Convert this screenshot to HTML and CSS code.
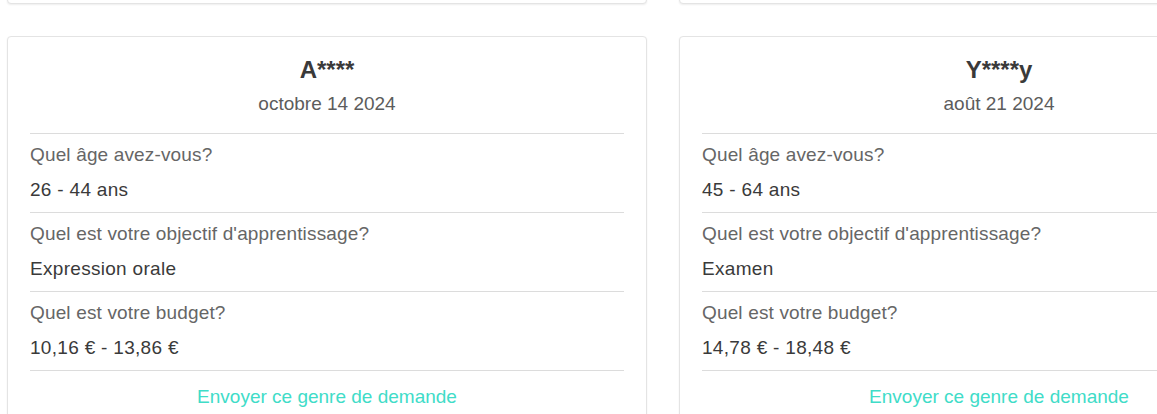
FILE: index.html
```html
<!DOCTYPE html>
<html lang="fr">
<head>
<meta charset="utf-8">
<title>Demandes</title>
<link rel="stylesheet" href="styles.css">
</head>
<body>
<div class="page">
  <div class="column">
    <div class="card card-prev"></div>
    <div class="card">
      <div class="card-head">
        <div class="name">A****</div>
        <div class="date">octobre 14 2024</div>
      </div>
      <div class="field">
        <div class="label">Quel âge avez-vous?</div>
        <div class="value">26 - 44 ans</div>
      </div>
      <div class="field">
        <div class="label">Quel est votre objectif d'apprentissage?</div>
        <div class="value">Expression orale</div>
      </div>
      <div class="field">
        <div class="label">Quel est votre budget?</div>
        <div class="value">10,16 € - 13,86 €</div>
      </div>
      <div class="action"><a class="link" href="#">Envoyer ce genre de demande</a></div>
    </div>
  </div>
  <div class="column">
    <div class="card card-prev"></div>
    <div class="card">
      <div class="card-head">
        <div class="name">Y****y</div>
        <div class="date">août 21 2024</div>
      </div>
      <div class="field">
        <div class="label">Quel âge avez-vous?</div>
        <div class="value">45 - 64 ans</div>
      </div>
      <div class="field">
        <div class="label">Quel est votre objectif d'apprentissage?</div>
        <div class="value">Examen</div>
      </div>
      <div class="field">
        <div class="label">Quel est votre budget?</div>
        <div class="value">14,78 € - 18,48 €</div>
      </div>
      <div class="action"><a class="link" href="#">Envoyer ce genre de demande</a></div>
    </div>
  </div>
</div>
</body>
</html>
```

FILE: styles.css
```css
html, body {
  margin: 0;
  padding: 0;
  overflow: hidden;
  background: #ffffff;
}
body {
  font-family: "Liberation Sans", Arial, sans-serif;
  color: #333;
}
.page {
  display: flex;
  gap: 32px;
  padding-left: 7px;
  width: 1400px;
}
.column {
  width: 640px;
  flex: none;
  display: flex;
  flex-direction: column;
  gap: 32px;
}
.card {
  background: #fff;
  border: 1px solid #e4e4e4;
  border-radius: 4px;
  box-shadow: 0 1px 2px rgba(0, 0, 0, 0.07);
  padding: 0 22px 0 22px;
}
.card-prev {
  height: 100px;
  margin-top: -98px;
}
.card-head {
  text-align: center;
  padding-top: 19px;
  padding-bottom: 17px;
}
.name {
  font-weight: bold;
  font-size: 24px;
  line-height: 28px;
  color: #3a3a3a;
}
.date {
  margin-top: 8px;
  font-size: 19px;
  line-height: 24px;
  color: #5c5c5c;
}
.field {
  border-top: 1px solid #dcdcdc;
  padding: 9px 0 10px;
}
.label {
  font-size: 19px;
  line-height: 24px;
  letter-spacing: 0.15px;
  color: #666;
}
.value {
  margin-top: 11px;
  font-size: 19px;
  line-height: 24px;
  letter-spacing: 0.3px;
  color: #3a3a3a;
}
.action {
  border-top: 1px solid #dcdcdc;
  padding-top: 14px;
  padding-bottom: 20px;
  text-align: center;
}
.link {
  font-size: 19px;
  line-height: 24px;
  color: #40dcc8;
  text-decoration: none;
}
```
